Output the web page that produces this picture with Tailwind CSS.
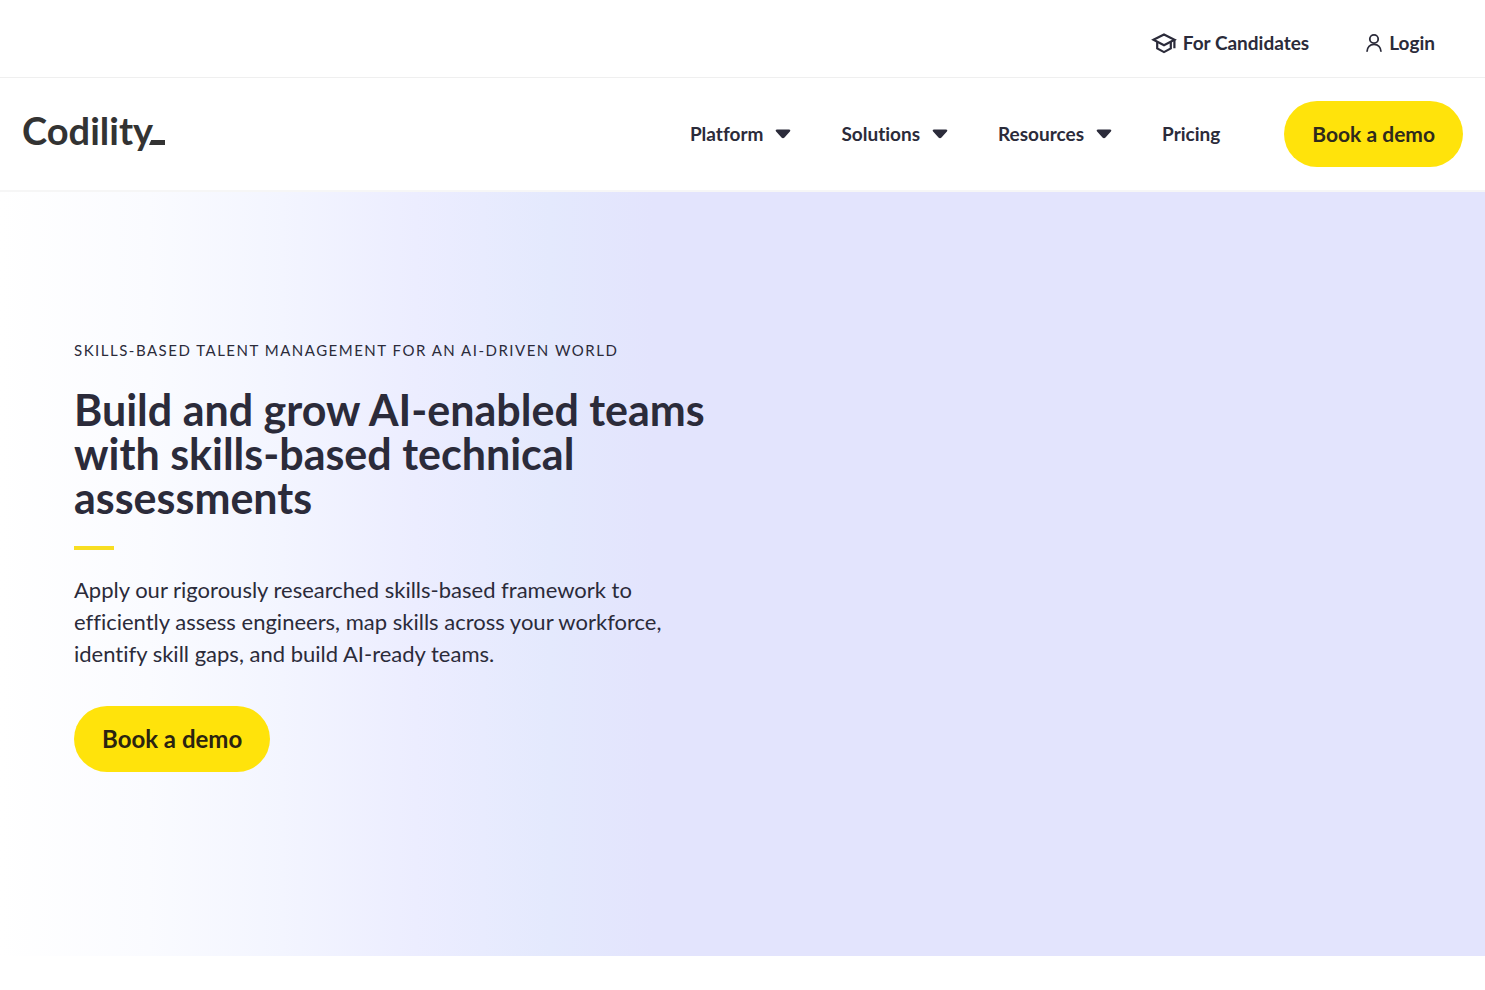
<!DOCTYPE html>
<html lang="en">
<head>
    <meta charset="UTF-8">
    <meta name="viewport" content="width=device-width, initial-scale=1.0">
    <title>Codility</title>
    <script src="https://cdn.jsdelivr.net/npm/@tailwindcss/browser@4"></script>
</head>
<body class="min-h-screen bg-white font-['Lato','Liberation_Sans',sans-serif] text-[#2b2b3a] [font-variant-ligatures:none]">

    <!-- Top bar -->
    <div class="flex h-[78px] items-center justify-end gap-14 border-b border-[#efefef] pt-2 pr-[50px] text-[19px] leading-7 font-bold">
        <a href="#" class="flex items-center gap-[6px]">
            <svg class="h-6 w-[26px]" viewBox="0 0 26 24" fill="none" stroke="currentColor" stroke-width="2.2" aria-hidden="true">
                <path d="M2.500 8.800 13 3.400l10.500 5.400L13 14.300z"/>
                <path d="M6.200 11v6.400l6.800 3.700 6.800-3.700V11M23.400 8.600v8.600"/>
            </svg>
            For Candidates
        </a>
        <a href="#" class="flex items-center gap-[6px]">
            <svg class="h-6 w-[18px]" viewBox="0 0 18 24" fill="none" stroke="currentColor" stroke-width="1.8" aria-hidden="true">
                <circle cx="9" cy="8" r="4.2"/>
                <path d="M2 20.800c.2-4.600 3-7.400 7-7.400s6.800 2.800 7 7.400"/>
            </svg>
            Login
        </a>
    </div>

    <!-- Main nav -->
    <header class="flex h-[114px] items-center justify-between border-b-2 border-[#f6f6f6] px-[22px]">
        <a href="#" class="flex items-baseline pb-2 text-[38px] leading-none font-bold text-[#333]" aria-label="Codility">
            Codility
            <svg class="-ml-1 h-[5px] w-4" viewBox="0 0 16 5" fill="currentColor" aria-hidden="true">
                <path d="M2.200 0H16v5H0z"/>
            </svg>
        </a>
        <nav class="flex items-center text-[19px] font-bold">
            <button type="button" class="mr-[50px] flex items-center gap-3">
                Platform
                <svg class="h-[10px] w-4" viewBox="0 0 16 10" fill="currentColor" aria-hidden="true">
                    <path d="M2 .5h12c1.300 0 1.700 1 .9 1.900L9.500 8.600c-.9 1-2.100 1-3 0L1.100 2.400C.3 1.500.7.500 2 .5z"/>
                </svg>
            </button>
            <button type="button" class="mr-[50px] flex items-center gap-3">
                Solutions
                <svg class="h-[10px] w-4" viewBox="0 0 16 10" fill="currentColor" aria-hidden="true">
                    <path d="M2 .5h12c1.300 0 1.700 1 .9 1.900L9.500 8.600c-.9 1-2.100 1-3 0L1.100 2.400C.3 1.500.7.500 2 .5z"/>
                </svg>
            </button>
            <button type="button" class="mr-[50px] flex items-center gap-3">
                Resources
                <svg class="h-[10px] w-4" viewBox="0 0 16 10" fill="currentColor" aria-hidden="true">
                    <path d="M2 .5h12c1.300 0 1.700 1 .9 1.900L9.500 8.600c-.9 1-2.100 1-3 0L1.100 2.400C.3 1.500.7.500 2 .5z"/>
                </svg>
            </button>
            <a href="#" class="mr-16">Pricing</a>
            <button type="button" class="rounded-full bg-[#ffe30b] px-7 py-[19px] text-[21px] leading-7 text-[#2f2a1c]">Book a demo</button>
        </nav>
    </header>

    <!-- Hero -->
    <main class="bg-[linear-gradient(90deg,#fff_0%,#fafbff_10%,#f3f5ff_19%,#ecedff_28%,#e4e9fd_37%,#e3e4fd_44%)] px-[74px] pt-[146px] pb-[184px]">
        <p class="text-[15px] leading-6 tracking-widest uppercase">Skills-based talent management for an AI-driven world</p>
        <h1 class="mt-[26px] max-w-[660px] text-[43px] leading-[44px] font-bold">Build and grow AI-enabled teams with skills-based technical assessments</h1>
        <div class="mt-[26px] h-1 w-10 bg-[#f8de22]"></div>
        <p class="mt-6 max-w-[620px] text-[22px] leading-8">Apply our rigorously researched skills-based framework to efficiently assess engineers, map skills across your workforce, identify skill gaps, and build AI-ready teams.</p>
        <button type="button" class="mt-9 rounded-full bg-[#ffe30b] px-7 py-[19px] text-2xl leading-7 font-bold text-[#2b2410]">Book a demo</button>
    </main>

</body>
</html>
